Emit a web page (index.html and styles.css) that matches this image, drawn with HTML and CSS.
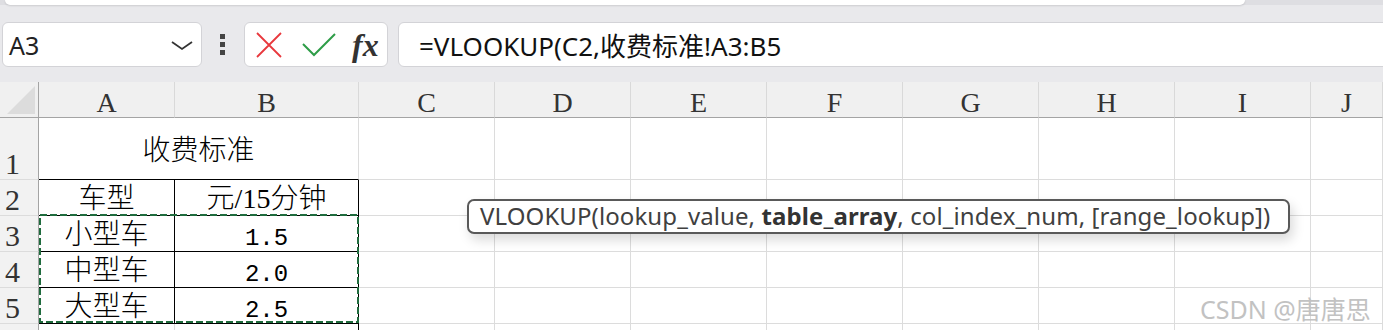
FILE: index.html
```html
<!DOCTYPE html>
<html lang="zh-CN">
<head>
    <meta charset="UTF-8">
    <title>VLOOKUP</title>
    <link rel="stylesheet" href="styles.css">
</head>
<body>

    <div class="topbar">
        <div class="tabstrip"></div>
    </div>

    <div class="formula-row">
        <div class="namebox">
            <span>A3</span>
            <svg class="chevron" width="22" height="10" viewBox="0 0 22 10"><polyline points="1,1 11,8 21,1" fill="none" stroke="#333" stroke-width="1.8"/></svg>
        </div>
        <div class="grip"><i></i><i></i><i></i></div>
        <div class="actions">
            <svg width="26" height="26" viewBox="0 0 26 26"><path d="M1 1 L25 25 M25 1 L1 25" stroke="#e8383d" stroke-width="1.8" fill="none"/></svg>
            <svg width="34" height="24" viewBox="0 0 34 24"><polyline points="1,11 12,22 33,1" fill="none" stroke="#2e9d48" stroke-width="2"/></svg>
            <span class="fx">fx</span>
        </div>
        <div class="formula">=VLOOKUP(C2,收费标准!A3:B5</div>
    </div>

    <div class="sheet-wrap">
        <div class="sheet">
            <div class="hd corner"></div>
            <div class="hd">A</div>
            <div class="hd">B</div>
            <div class="hd">C</div>
            <div class="hd">D</div>
            <div class="hd">E</div>
            <div class="hd">F</div>
            <div class="hd">G</div>
            <div class="hd">H</div>
            <div class="hd">I</div>
            <div class="hd">J</div>

            <div class="rh">1</div>
            <div class="c title">收费标准</div>
            <div class="c"></div><div class="c"></div><div class="c"></div><div class="c"></div>
            <div class="c"></div><div class="c"></div><div class="c"></div><div class="c"></div>

            <div class="rh">2</div>
            <div class="c t ta">车型</div>
            <div class="c t tb">元/15分钟</div>
            <div class="c"></div><div class="c"></div><div class="c"></div><div class="c"></div>
            <div class="c"></div><div class="c"></div><div class="c"></div><div class="c"></div>

            <div class="rh">3</div>
            <div class="c t ta">小型车</div>
            <div class="c t tb num">1.5</div>
            <div class="c"></div><div class="c"></div><div class="c"></div><div class="c"></div>
            <div class="c"></div><div class="c"></div><div class="c"></div><div class="c"></div>

            <div class="rh">4</div>
            <div class="c t ta">中型车</div>
            <div class="c t tb num">2.0</div>
            <div class="c"></div><div class="c"></div><div class="c"></div><div class="c"></div>
            <div class="c"></div><div class="c"></div><div class="c"></div><div class="c"></div>

            <div class="rh">5</div>
            <div class="c t ta">大型车</div>
            <div class="c t tb num">2.5</div>
            <div class="c"></div><div class="c"></div><div class="c"></div><div class="c"></div>
            <div class="c"></div><div class="c"></div><div class="c"></div><div class="c"></div>

            <div class="rh"></div>
            <div class="c"></div>
            <div class="c tb"></div>
            <div class="c"></div><div class="c"></div><div class="c"></div><div class="c"></div>
            <div class="c"></div><div class="c"></div><div class="c"></div><div class="c"></div>
        </div>

        <!-- copy marquee around A3:B5 -->
        <svg class="marquee" width="324" height="114" viewBox="0 0 324 114">
            <rect x="2" y="2" width="318" height="107" fill="none" stroke="#1f6b3d" stroke-width="2" stroke-dasharray="7 3"/>
        </svg>

        <div class="tip">VLOOKUP(lookup_value, <b>table_array</b>, col_index_num, [range_lookup])</div>

        <div class="mark">CSDN @唐唐思</div>
    </div>

</body>
</html>
```

FILE: styles.css
```css
body {
    margin: 0;
    width: 1383px;
    height: 330px;
    overflow: hidden;
    background: #e9e9ec;
    font-family: 'Noto Sans', 'Noto Sans CJK SC', sans-serif;
    color: #222;
}

.topbar {
    height: 5px;
    background: #dedee2;
}

.tabstrip {
    margin-left: 5px;
    width: 1240px;
    height: 5px;
    background: #fff;
    border-radius: 0 0 8px 8px;
    box-shadow: 0 1px 2px rgba(0, 0, 0, 0.12);
}

.formula-row {
    display: flex;
    align-items: center;
    height: 45px;
    margin: 17px 0 15px;
    padding-left: 2px;
}

.namebox,
.actions,
.formula {
    box-sizing: border-box;
    height: 45px;
    background: #fff;
    border: 1px solid #d3d3d7;
    border-radius: 6px;
    display: flex;
    align-items: center;
}

.namebox {
    width: 200px;
    padding: 0 8px 0 6px;
    justify-content: space-between;
    font-size: 25px;
}

.chevron {
    margin-top: 2px;
}

.grip {
    width: 5px;
    margin-left: 18px;
    display: flex;
    flex-direction: column;
    gap: 3px;
}

.grip i {
    display: block;
    width: 5px;
    height: 5px;
    background: #444;
}

.actions {
    width: 144px;
    margin-left: 19px;
    padding-left: 11px;
    gap: 18px;
}

.actions svg:nth-child(2) {
    margin-left: 2px;
}

.fx {
    font-family: 'Liberation Serif', serif;
    font-style: italic;
    font-weight: bold;
    font-size: 32px;
    line-height: 1;
    color: #333;
    margin-left: -2px;
}

.formula {
    flex: 1;
    margin-left: 10px;
    margin-right: -10px;
    padding-left: 20px;
    font-size: 26px;
    color: #111;
}

.sheet-wrap {
    position: relative;
}

.sheet {
    display: grid;
    grid-template-columns: 39px 136px 184px 136px 136px 136px 136px 136px 136px 136px 1fr;
    grid-template-rows: 36px 62px 36px 36px 36px 36px 6px;
    background: #fff;
}

.sheet > div {
    box-sizing: border-box;
    border-right: 1px solid #dcdcdc;
    border-bottom: 1px solid #dcdcdc;
    line-height: 1;
}

/* last row is only a sliver, no bottom line */
.sheet > div:nth-last-child(-n+11) {
    border-bottom: none;
}

.hd {
    background: #f0f0f0;
    border-bottom-color: #a4a4a4 !important;
    border-right-color: #d9d9d9 !important;
    font-family: 'Liberation Serif', serif;
    font-size: 28px;
    color: #333;
    display: flex;
    align-items: flex-end;
    justify-content: center;
}

.corner {
    position: relative;
    border-right-color: #a4a4a4 !important;
}

.corner::after {
    content: '';
    position: absolute;
    left: 7px;
    top: 4px;
    width: 28px;
    height: 28px;
    background: #dcdcdc;
    clip-path: polygon(100% 0, 100% 100%, 0 100%);
}

.rh {
    background: #f2f2f2;
    border-right-color: #a4a4a4 !important;
    font-family: 'Liberation Serif', serif;
    font-size: 30px;
    color: #333;
    display: flex;
    align-items: flex-end;
    padding-left: 5px;
}

.c {
    display: flex;
    align-items: center;
    justify-content: center;
    font-family: 'Liberation Serif', 'Noto Sans CJK SC', serif;
    font-size: 28px;
    font-weight: 300;
    color: #000;
}

.title {
    grid-column: span 2;
    padding-top: 4px;
    border-bottom-color: #000 !important;
}

.t {
    padding-top: 3px;
    border-bottom-color: #000 !important;
}

.ta,
.tb {
    border-right-color: #000 !important;
}

.num {
    font-family: 'Liberation Mono', monospace;
    font-size: 24px;
    font-weight: normal;
    align-items: flex-end;
    padding-top: 0;
}

.marquee {
    position: absolute;
    left: 38px;
    top: 131px;
}

.tip {
    position: absolute;
    left: 467px;
    top: 117px;
    box-sizing: border-box;
    width: 823px;
    height: 35px;
    padding-left: 11px;
    background: #fff;
    border: 2px solid #595959;
    border-radius: 7px;
    box-shadow: 3px 6px 12px rgba(0, 0, 0, 0.15);
    font-size: 24px;
    line-height: 30px;
    letter-spacing: 0.1px;
    color: #404040;
    white-space: nowrap;
}

.tip b {
    color: #333;
}

.mark {
    position: absolute;
    left: 1200px;
    top: 208px;
    font-size: 25px;
    color: #c2c2c2;
    white-space: nowrap;
}
```
